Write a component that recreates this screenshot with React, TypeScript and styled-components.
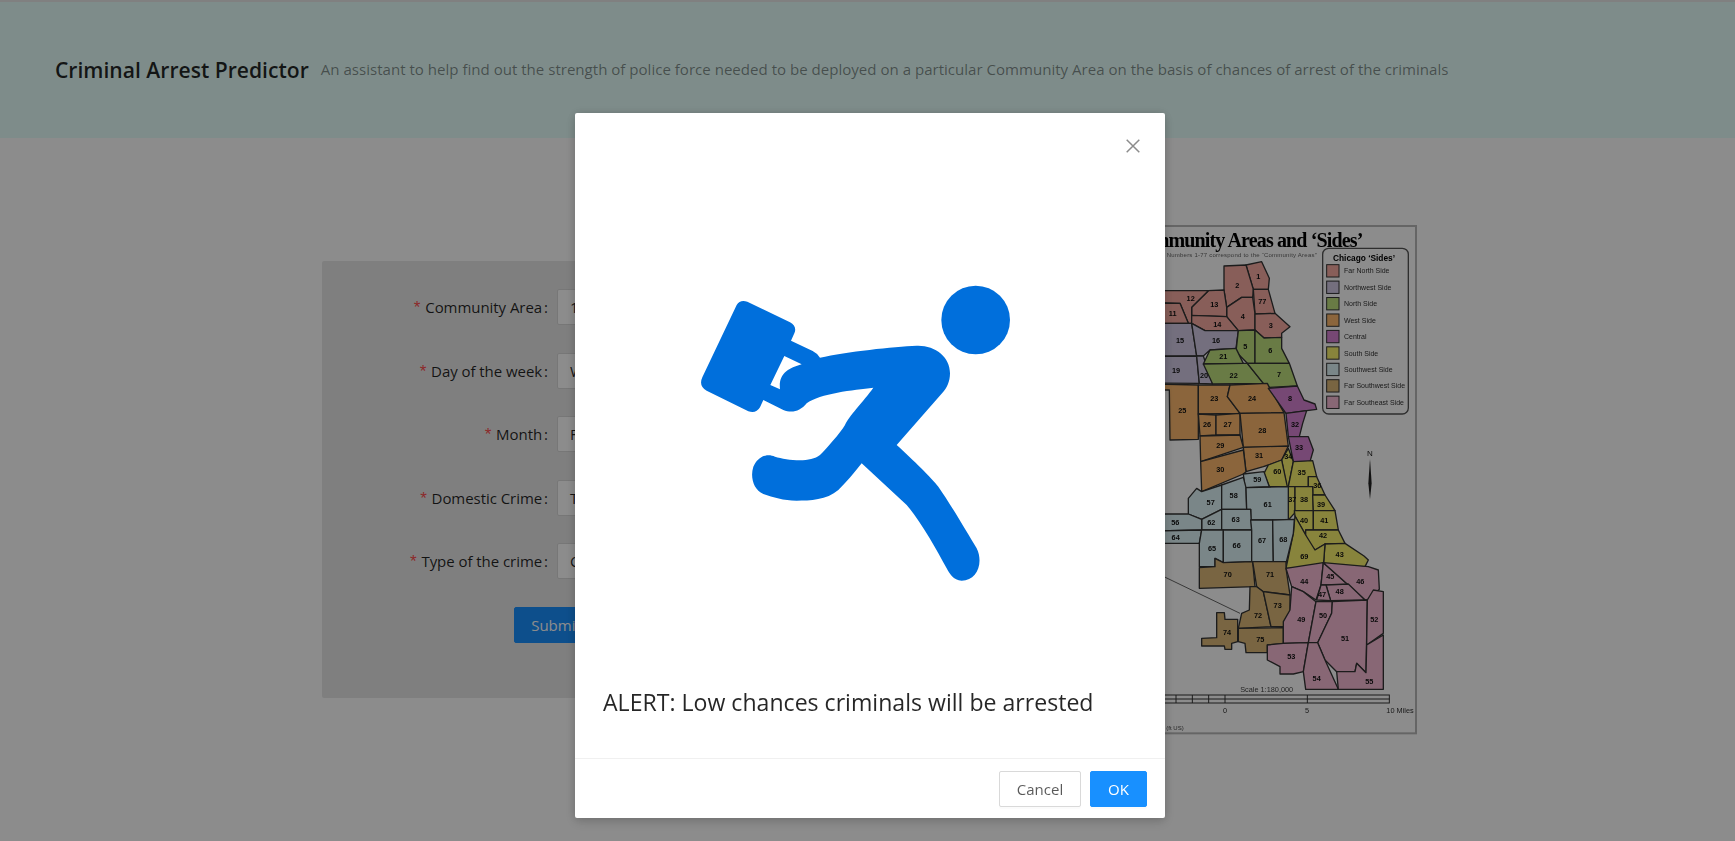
import React from "react";
import styled, { createGlobalStyle } from "styled-components";

const uiFont = `"Open Sans", "Noto Sans", "Liberation Sans", sans-serif`;

const Global = createGlobalStyle`
  html, body { margin: 0; padding: 0; height: 841px; overflow: hidden; background: #fff; }
  * { box-sizing: border-box; }
`;

const Page = styled.div`
  height: 841px;
  overflow: hidden;
  font-family: ${uiFont};
  background: #fff;
`;
const Header = styled.header`
  height: 138px;
  background: #e6fffb;
  border-top: 2px solid #e9e9e9;
  padding: 0 0 0 55px;
  display: flex;
  align-items: center;
  gap: 12px;
`;
const Title = styled.h1`
  margin: 0;
  font-size: 21.1px;
  font-weight: 600;
  color: rgba(0, 0, 0, 0.85);
  white-space: nowrap;
  position: relative;
  top: -1px;
`;
const SubTitle = styled.span`
  font-size: 15.07px;
  color: rgba(0, 0, 0, 0.45);
  white-space: nowrap;
  position: relative;
  top: -1px;
`;
const Main = styled.main`
  display: flex;
  align-items: flex-start;
  gap: 20px;
  padding-left: 322px;
`;
const FormPanel = styled.form`
  width: 660px;
  height: 437px;
  margin-top: 123px;
  padding-top: 28px;
  background: #e8e8e8;
  border-radius: 2px;
`;
const Row = styled.div`
  display: flex;
  align-items: center;
  height: 36px;
  margin-bottom: 27.5px;
`;
const Label = styled.label`
  width: 226px;
  padding-top: 1px;
  text-align: right;
  font-size: 15px;
  letter-spacing: -0.05px;
  color: rgba(0, 0, 0, 0.85);
  white-space: nowrap;
  &::before {
    content: "*";
    color: #ff4d4f;
    margin-right: 3px;
    font-size: 17px;
    font-family: "Liberation Mono", monospace;
  }
  &::after {
    content: ":";
    margin-left: 2px;
  }
`;
const Field = styled.div`
  width: 380px;
  height: 36px;
  margin-left: 9px;
  padding: 0 12px;
  display: flex;
  align-items: center;
  font-size: 15px;
  color: rgba(0, 0, 0, 0.85);
  background: #fff;
  border: 1px solid #d9d9d9;
  border-radius: 2px;
`;
const Submit = styled.button`
  display: block;
  margin: 0 0 0 192px;
  width: 84px;
  height: 36px;
  padding: 0;
  font: 15px ${uiFont};
  color: #fff;
  background: #1890ff;
  border: 1px solid #1890ff;
  border-radius: 2px;
`;
const MapSvg = styled.svg`
  display: block;
  flex: none;
  margin-top: 82px;
  filter: blur(0.55px);
`;
const Overlay = styled.div`
  position: fixed;
  inset: 0;
  background: rgba(0, 0, 0, 0.45);
`;
const Modal = styled.div`
  position: fixed;
  left: 575px;
  top: 113px;
  width: 590px;
  height: 705px;
  background: #fff;
  border-radius: 2px;
  box-shadow: 0 4px 12px rgba(0, 0, 0, 0.15), 0 0 10px rgba(0, 0, 0, 0.12);
  display: flex;
  flex-direction: column;
`;
const CloseIcon = styled.svg`
  position: absolute;
  right: 25px;
  top: 26px;
`;
const ModalBody = styled.div`
  height: 646px;
  padding: 157px 0 0 85px;
  border-bottom: 1px solid #f0f0f0;
`;
const Figure = styled.svg`
  display: block;
`;
const Alert = styled.p`
  margin: 94px 0 0 -57px;
  font-size: 23.1px;
  font-weight: 500;
  line-height: 36px;
  color: rgba(0, 0, 0, 0.85);
  white-space: nowrap;
`;
const ModalFooter = styled.footer`
  flex: 1;
  display: flex;
  justify-content: flex-end;
  align-items: flex-start;
  gap: 9px;
  padding: 12px 18px 0 0;
`;
const FooterButton = styled.button<{ $primary?: boolean; $width: number }>`
  width: ${(p) => p.$width}px;
  height: 36px;
  font: 15px ${uiFont};
  color: ${(p) => (p.$primary ? "#fff" : "rgba(0,0,0,.65)")};
  background: ${(p) => (p.$primary ? "#1890ff" : "#fff")};
  border: 1px solid ${(p) => (p.$primary ? "#1890ff" : "#d9d9d9")};
  border-radius: 2px;
  box-shadow: 0 2px 0 rgba(0, 0, 0, 0.015);
  padding: 0;
`;

const SIDE: Record<string, string> = {
  fn: "#f7aca3",
  nw: "#d3cbe6",
  n: "#bfe07f",
  w: "#fdb96e",
  c: "#d884d4",
  s: "#f8f06e",
  sw: "#dff4f7",
  fsw: "#dcb878",
  fse: "#f8bcd6",
};

type Area = [string, number, number, string, string];
const AREAS: Area[] = [
  ["1", 295, 170, "fn", "258,135 305,125 328,175 325,208 280,208"],
  ["2", 232, 198, "fn", "192,138 258,135 280,208 278,232 245,232 200,262 192,210"],
  ["77", 307, 245, "fn", "280,208 325,208 345,280 285,282"],
  ["4", 248, 289, "fn", "200,262 245,232 278,232 285,282 285,330 235,332 200,290"],
  ["3", 332, 317, "fn", "285,282 345,280 390,320 365,340 365,352 312,354 285,330"],
  ["13", 163, 254, "fn", "95,262 145,212 192,210 200,262 200,290 95,286"],
  ["12", 92, 236, "fn", "-200,212 145,212 95,262 95,310 85,310 60,250 -200,240"],
  ["11", 38, 281, "fn", "-200,250 60,250 85,310 -200,310"],
  ["14", 172, 315, "fn", "95,286 200,290 235,332 135,332 95,310"],
  ["15", 60, 361, "nw", "-200,310 95,310 110,408 -200,410"],
  ["16", 168, 361, "nw", "95,310 135,332 235,332 228,385 150,390 130,408 110,408"],
  ["19", 48, 451, "nw", "-200,410 110,408 118,490 -200,488"],
  ["20", 132, 467, "nw", "110,408 130,408 158,492 118,490"],
  ["5", 256, 380, "n", "235,332 285,330 285,430 262,430 228,395"],
  ["6", 331, 393, "n", "285,330 312,354 365,352 365,385 388,430 285,430"],
  ["21", 190, 409, "n", "150,390 228,385 250,430 130,432"],
  ["22", 221, 467, "n", "130,432 250,430 262,430 310,490 158,492"],
  ["7", 357, 465, "n", "262,430 388,430 412,498 328,502 310,490"],
  ["25", 67, 573, "w", "-200,488 115,495 115,658 30,660 28,510 -200,510"],
  ["23", 163, 537, "w", "115,495 210,495 202,530 240,580 115,582"],
  ["24", 276, 537, "w", "210,495 322,490 328,502 372,578 240,580 202,530"],
  ["26", 141, 614, "w", "115,582 168,585 168,645 120,648"],
  ["27", 203, 614, "w", "168,585 240,580 240,645 168,645"],
  ["28", 307, 631, "w", "240,580 372,578 385,680 250,682"],
  ["29", 181, 677, "w", "120,648 240,645 250,682 122,725"],
  ["31", 297, 707, "w", "250,682 385,678 365,720 325,735 310,740 258,755"],
  ["30", 181, 748, "w", "122,725 250,690 258,755 250,762 125,815"],
  ["8", 390, 536, "c", "325,505 412,498 432,540 465,552 470,568 440,572 378,580"],
  ["32", 405, 613, "c", "378,580 440,572 428,610 418,650 385,650"],
  ["33", 417, 682, "c", "385,650 445,650 460,690 450,725 400,725"],
  ["34", 385, 710, "s", "365,720 385,685 400,725 385,800 380,800"],
  ["60", 352, 755, "s", "325,735 365,720 382,800 328,800 312,760"],
  ["35", 425, 758, "s", "400,725 458,722 470,770 445,770 445,800 385,800"],
  ["36", 472, 798, "s", "445,770 470,770 495,825 458,825 458,800 445,800"],
  ["37", 397, 838, "s", "385,800 405,800 405,872 403,880 385,900"],
  ["38", 432, 838, "s", "405,800 458,800 460,872 405,872"],
  ["39", 483, 853, "s", "458,825 495,825 525,872 460,872"],
  ["40", 432, 903, "s", "403,872 460,872 460,930 437,930 437,945 405,888"],
  ["41", 493, 902, "s", "460,872 525,872 535,930 460,930"],
  ["42", 489, 948, "s", "437,930 535,930 555,970 495,972 465,990 437,960"],
  ["43", 539, 1005, "s", "495,972 555,970 612,1008 625,1020 615,1040 490,1040"],
  ["69", 433, 1010, "s", "405,888 437,945 465,990 495,972 490,1040 378,1045 400,940"],
  ["59", 292, 780, "sw", "250,762 312,755 328,800 255,803"],
  ["57", 152, 849, "sw", "125,815 185,795 185,868 125,898 85,882 85,835 110,805"],
  ["58", 221, 828, "sw", "185,795 250,772 258,803 260,868 185,868"],
  ["61", 323, 853, "sw", "258,803 385,800 385,900 272,900 272,868 260,868"],
  ["62", 154, 909, "sw", "125,898 185,868 185,930 125,930"],
  ["63", 227, 899, "sw", "185,868 272,868 275,930 185,930"],
  ["56", 46, 909, "sw", "-100,882 85,882 125,898 125,930 -100,935"],
  ["64", 47, 953, "sw", "-100,935 125,930 118,970 -100,970"],
  ["65", 156, 985, "sw", "125,930 190,930 190,1028 165,1015 165,1040 118,1040 118,970"],
  ["66", 230, 978, "sw", "190,930 275,930 275,1025 190,1028"],
  ["67", 306, 962, "sw", "272,900 338,900 340,1025 275,1025 275,930"],
  ["68", 370, 960, "sw", "338,900 403,898 400,940 378,1030 340,1025"],
  ["70", 203, 1065, "fsw", "118,1043 165,1040 165,1015 190,1028 278,1025 285,1100 118,1105"],
  ["71", 330, 1065, "fsw", "278,1025 378,1025 378,1045 390,1125 310,1115 290,1100"],
  ["72", 294, 1186, "fsw", "270,1100 290,1100 310,1115 333,1220 235,1225 245,1180 268,1170"],
  ["73", 353, 1158, "fsw", "310,1115 390,1125 390,1175 370,1220 333,1220"],
  ["74", 201, 1238, "fsw", "170,1178 193,1178 195,1198 233,1198 233,1265 215,1270 215,1288 195,1288 193,1278 125,1278 125,1255 170,1253"],
  ["75", 301, 1258, "fsw", "235,1225 370,1223 370,1270 322,1275 322,1298 258,1298 255,1270 235,1265"],
  ["44", 433, 1084, "fse", "378,1045 490,1028 483,1095 468,1140 430,1115 395,1100"],
  ["45", 511, 1070, "fse", "490,1028 565,1095 500,1095 483,1095"],
  ["46", 601, 1084, "fse", "490,1028 625,1040 655,1050 658,1108 622,1140 615,1140 565,1095"],
  ["48", 539, 1116, "fse", "498,1095 565,1092 615,1140 512,1142"],
  ["47", 486, 1124, "fse", "470,1140 483,1095 498,1095 512,1142"],
  ["49", 424, 1198, "fse", "395,1100 430,1115 468,1145 445,1268 370,1270 370,1205 390,1170"],
  ["50", 489, 1186, "fse", "468,1145 517,1145 515,1180 473,1268 445,1268"],
  ["51", 555, 1255, "fse", "517,1145 622,1140 618,1358 590,1330 585,1355 530,1355 495,1320 473,1268 515,1180"],
  ["52", 643, 1199, "fse", "622,1140 640,1110 670,1115 670,1240 620,1275"],
  ["53", 394, 1310, "fse", "322,1275 370,1270 445,1268 430,1355 400,1362 360,1362 360,1340 322,1320"],
  ["54", 470, 1375, "fse", "445,1268 473,1268 495,1320 535,1408 437,1408 430,1355"],
  ["55", 628, 1385, "fse", "530,1355 585,1355 590,1330 618,1358 620,1275 670,1245 670,1408 535,1408"],
];

const LEGEND: [string, string][] = [
  ["fn", "Far North Side"],
  ["nw", "Northwest Side"],
  ["n", "North Side"],
  ["w", "West Side"],
  ["c", "Central"],
  ["s", "South Side"],
  ["sw", "Southwest Side"],
  ["fsw", "Far Southwest Side"],
  ["fse", "Far Southeast Side"],
];

const MAP_SANS = "Liberation Sans, sans-serif";

function CommunityMap() {
  return (
    <MapSvg width={420} height={520} viewBox="-474 0 1260 1560" aria-label="Community Areas map">
      <rect x={-470} y={18} width={1238} height={1522} fill="#fff" stroke="#b8b8b8" strokeWidth={6} />
      <text x={610} y={82} textAnchor="end" fontFamily="Liberation Serif, serif" fontWeight={700} fontSize={60} fill="#000" textLength={700}>
        Community Areas and ‘Sides’
      </text>
      <text x={470} y={111} textAnchor="end" fontFamily={MAP_SANS} fontSize={18} fill="#666" textLength={450}>
        Numbers 1-77 correspond to the “Community Areas”
      </text>
      {AREAS.map(([label, , , side, points]) => (
        <polygon key={label} points={points} fill={SIDE[side]} stroke="#333" strokeWidth={4} strokeLinejoin="round" />
      ))}
      {AREAS.map(([label, x, y]) => (
        <text key={label} x={x} y={y + 7} textAnchor="middle" fontFamily={MAP_SANS} fontWeight={700} fontSize={22} fill="#111">
          {label}
        </text>
      ))}
      <line x1={-40} y1={1045} x2={240} y2={1180} stroke="#666" strokeWidth={3} />
      <rect x={488} y={85} width={257} height={497} rx={18} fill="#fff" stroke="#555" strokeWidth={4} />
      <text x={612} y={122} textAnchor="middle" fontFamily={MAP_SANS} fontWeight={700} fontSize={25} fill="#000">
        Chicago ‘Sides’
      </text>
      {LEGEND.map(([side, name], i) => (
        <g key={side}>
          <rect x={500} y={134 + i * 49.3} width={37} height={37} fill={SIDE[side]} stroke="#333" strokeWidth={3} />
          <text x={552} y={160 + i * 49.3} fontFamily={MAP_SANS} fontSize={21} fill="#333">
            {name}
          </text>
        </g>
      ))}
      <text x={630} y={708} textAnchor="middle" fontFamily={MAP_SANS} fontSize={24} fill="#222">N</text>
      <polygon points="630,716 635,790 630,838 625,790" fill="#222" />
      <text x={320} y={1416} textAnchor="middle" fontFamily={MAP_SANS} fontSize={22} fill="#444">Scale 1:180,000</text>
      <g fill="none" stroke="#333" strokeWidth={3}>
        <rect x={-200} y={1425} width={888} height={24} />
        <line x1={-200} y1={1437} x2={688} y2={1437} />
        <line x1={48} y1={1425} x2={48} y2={1449} />
        <line x1={97} y1={1425} x2={97} y2={1449} />
        <line x1={146} y1={1425} x2={146} y2={1449} />
        <line x1={195} y1={1425} x2={195} y2={1449} />
        <line x1={442} y1={1425} x2={442} y2={1449} />
      </g>
      <g fontFamily={MAP_SANS} fontSize={22} fill="#333" textAnchor="middle">
        <text x={195} y={1478}>0</text>
        <text x={441} y={1478}>5</text>
        <text x={720} y={1478}>10 Miles</text>
      </g>
      <text x={45} y={1530} textAnchor="middle" fontFamily={MAP_SANS} fontSize={18} fill="#444">(ft US)</text>
    </MapSvg>
  );
}

const RUNNER =
  "M480,263 C560,245 700,230 770,227 C825,225 870,260 870,310 C870,335 860,355 850,365 L710,525 C760,570 815,625 835,650 C870,700 920,785 950,835 C972,880 950,932 905,932 C880,932 868,910 860,895 C830,840 780,750 740,705 L605,580 C570,625 545,650 535,660 C500,690 450,692 410,692 C370,692 340,682 310,672 C280,660 270,620 280,590 C295,555 325,550 345,560 C380,570 450,580 480,555 C500,535 540,490 555,465 C565,440 610,395 640,353 C580,360 480,370 440,400 C420,425 395,430 370,420 L310,390 L300,412 Q288,432 265,424 L140,362 Q115,348 127,322 L230,105 Q240,88 262,95 L390,157 Q412,170 403,190 L393,212 L458,243 Q472,250 480,263 Z M373,258 L425,283 C385,295 355,310 360,358 L331,345 Z";

const FIELDS: [string, string][] = [
  ["Community Area", "1"],
  ["Day of the week", "Wednesday"],
  ["Month", "February"],
  ["Domestic Crime", "True"],
  ["Type of the crime", "Criminal Damage"],
];

export default function App() {
  return (
    <Page>
      <Global />
      <Header>
        <Title>Criminal Arrest Predictor</Title>
        <SubTitle>
          An assistant to help find out the strength of police force needed to be deployed on a particular Community Area on the basis of chances of arrest of the criminals
        </SubTitle>
      </Header>
      <Main>
        <FormPanel>
          {FIELDS.map(([label, value]) => (
            <Row key={label}>
              <Label>{label}</Label>
              <Field>{value}</Field>
            </Row>
          ))}
          <Submit type="button">Submit</Submit>
        </FormPanel>
        <CommunityMap />
      </Main>
      <Overlay />
      <Modal>
        <CloseIcon width={14} height={14} viewBox="0 0 14 14" aria-label="Close">
          <path d="M0.7 0.7 L13.3 13.3 M13.3 0.7 L0.7 13.3" stroke="#8c8c8c" strokeWidth={1.5} fill="none" />
        </CloseIcon>
        <ModalBody>
          <Figure width={380} height={320} viewBox="0 0 1140 960" aria-label="Running person with briefcase">
            <circle cx={947} cy={150} r={103} fill="#006fdc" />
            <path d={RUNNER} fill="#006fdc" fillRule="evenodd" />
          </Figure>
          <Alert>ALERT: Low chances criminals will be arrested</Alert>
        </ModalBody>
        <ModalFooter>
          <FooterButton type="button" $width={82}>Cancel</FooterButton>
          <FooterButton type="button" $primary $width={57}>OK</FooterButton>
        </ModalFooter>
      </Modal>
    </Page>
  );
}
